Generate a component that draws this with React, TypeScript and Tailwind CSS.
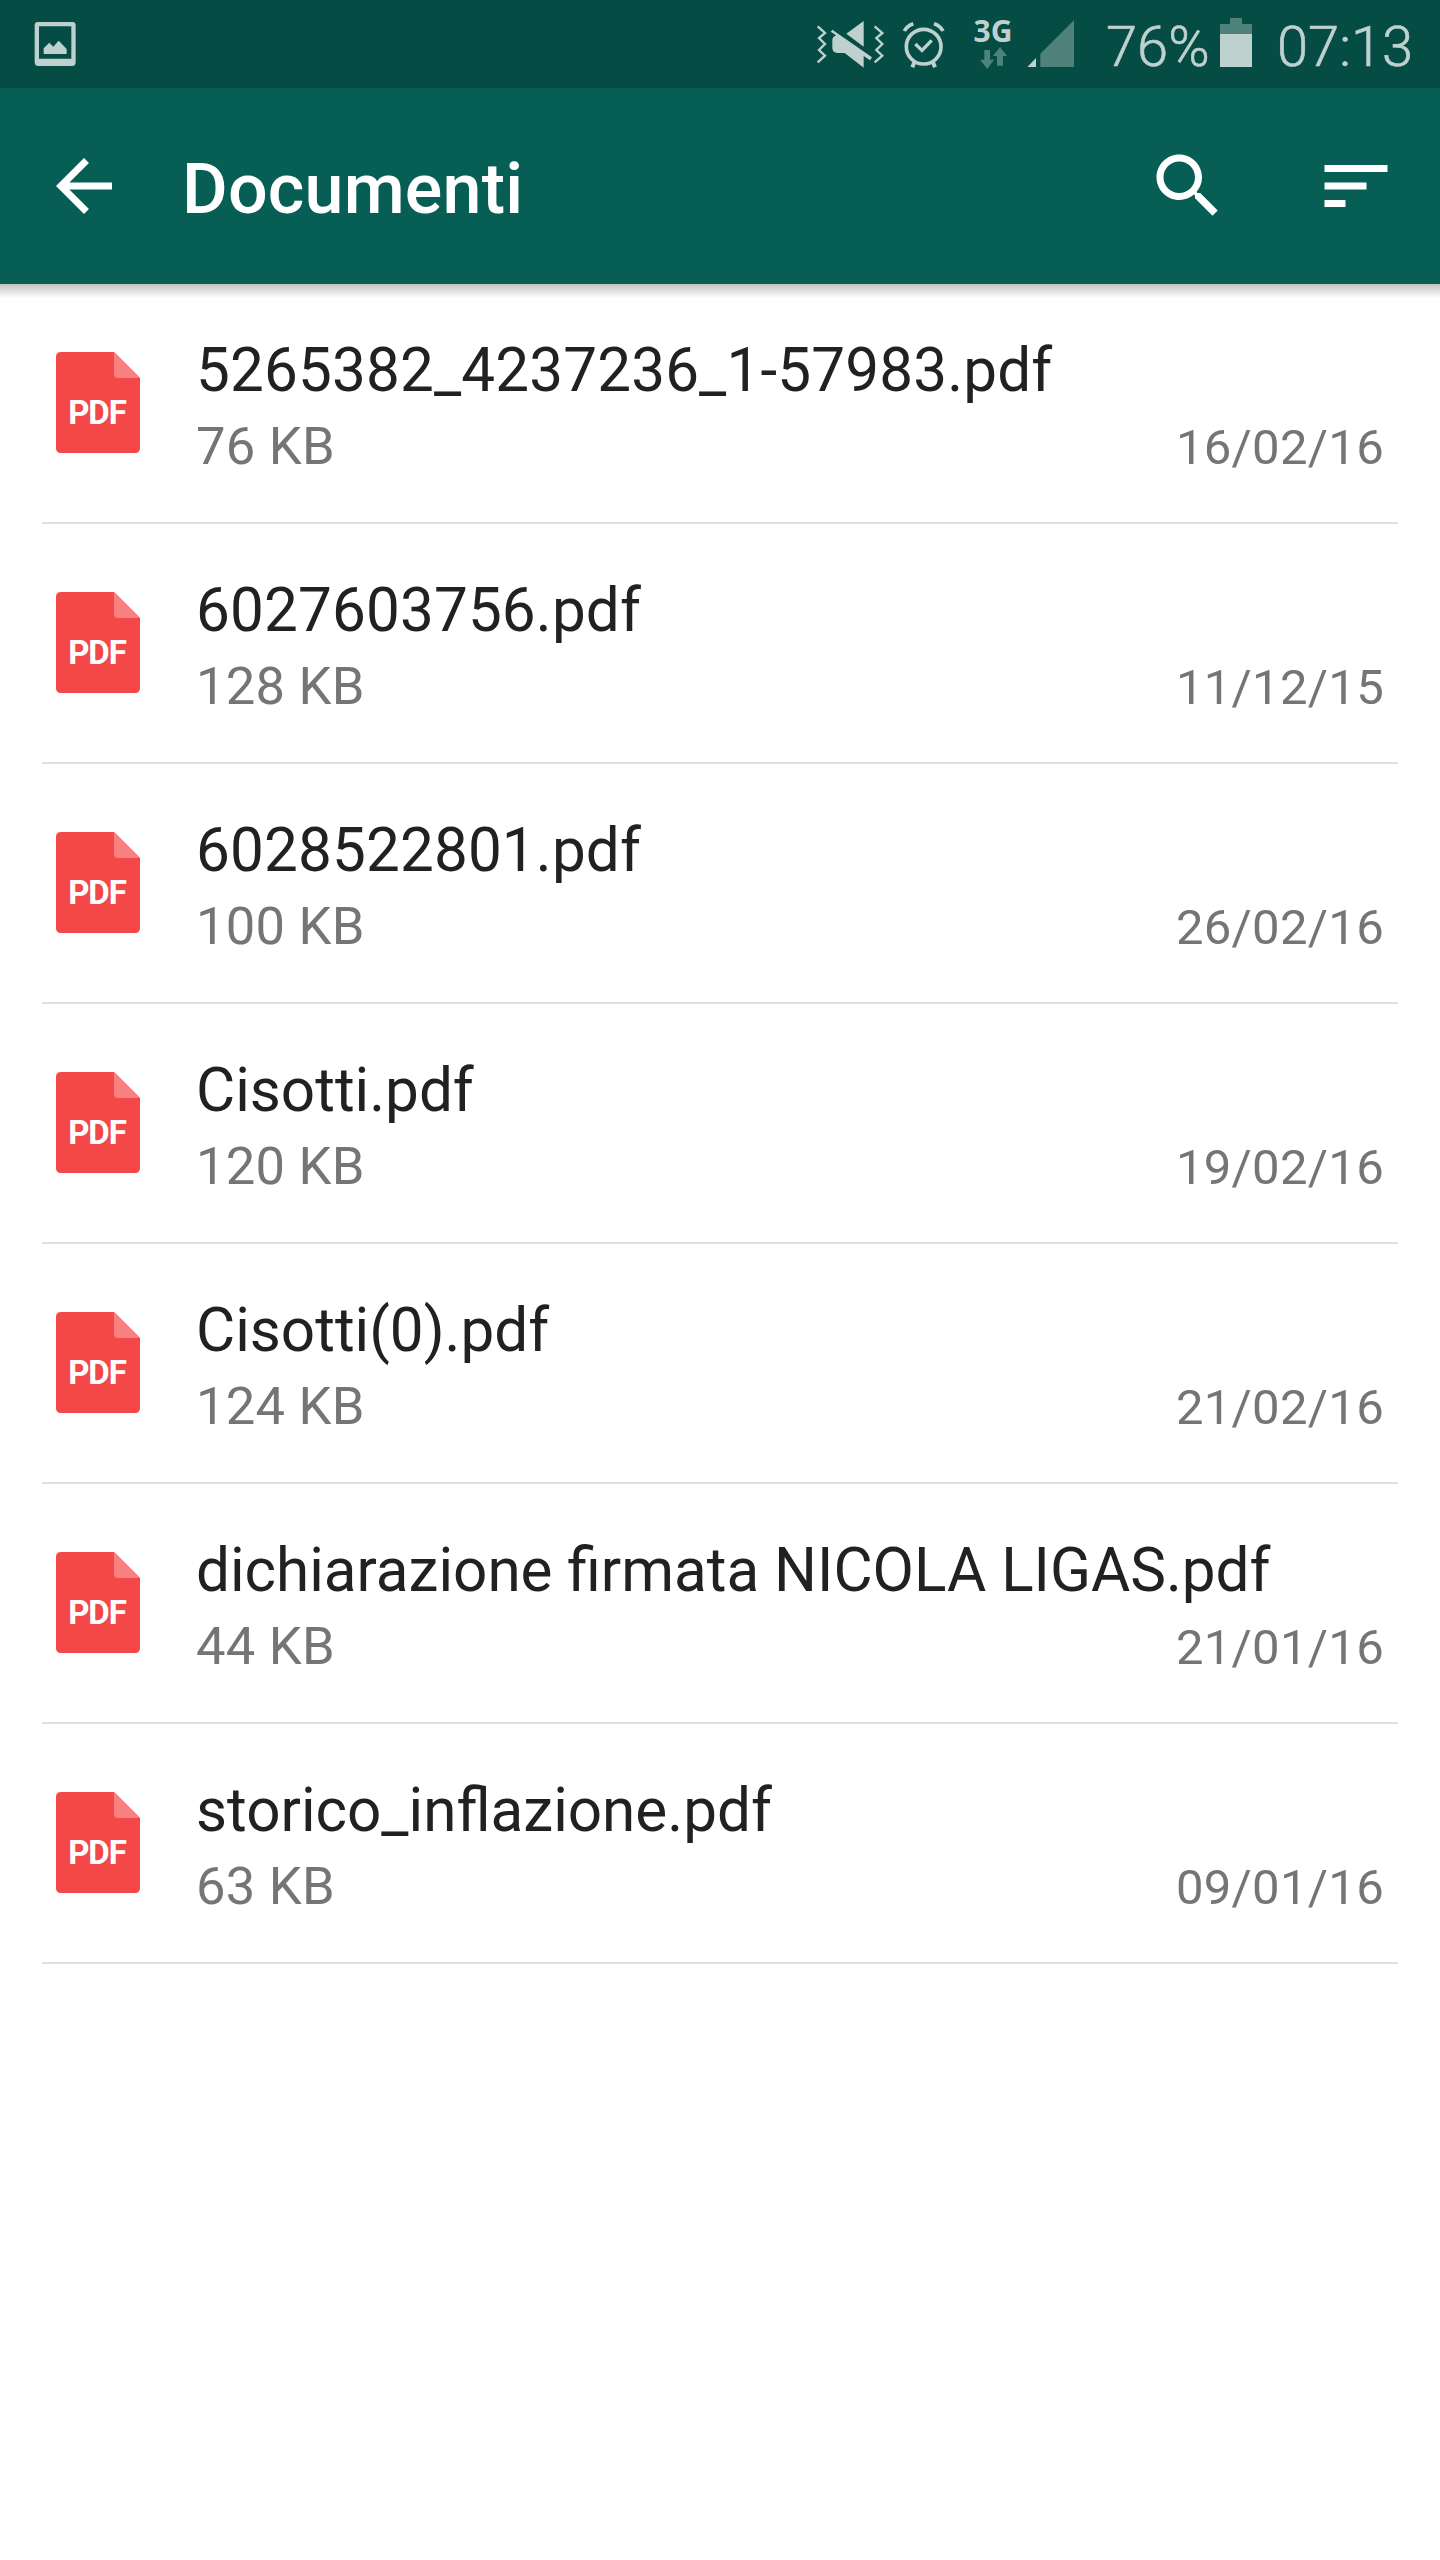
type Doc = { name: string; size: string; date: string }

const docs: Doc[] = [
  { name: '5265382_4237236_1-57983.pdf', size: '76 KB', date: '16/02/16' },
  { name: '6027603756.pdf', size: '128 KB', date: '11/12/15' },
  { name: '6028522801.pdf', size: '100 KB', date: '26/02/16' },
  { name: 'Cisotti.pdf', size: '120 KB', date: '19/02/16' },
  { name: 'Cisotti(0).pdf', size: '124 KB', date: '21/02/16' },
  { name: 'dichiarazione firmata NICOLA LIGAS.pdf', size: '44 KB', date: '21/01/16' },
  { name: 'storico_inflazione.pdf', size: '63 KB', date: '09/01/16' },
]

function StatusBar() {
  return (
    <div className="flex h-[88px] items-start bg-[#054D44] text-[#BFD1CF]">
      {/* Picture notification */}
      <svg viewBox="102 0 126 264" className="ml-[34px] h-[88px] w-[42px]" fill="currentColor">
        <path fillRule="evenodd" d="M114 66h103q10 0 10 10v111q0 11-11 11h-101q-11 0-11-11V76q0-10 10-10zM117 79v97h97V79z" />
        <path d="M131 145l17-17 12 12 16-18 24 25v15h-69z" />
      </svg>

      {/* Vibrate / muted */}
      <svg viewBox="48 0 204 264" className="ml-[740px] h-[88px] w-[68px]" fill="currentColor">
        <path d="M53 79l22 20-18 15 18 18-18 18 18 17-22 20M224 79l23 20-18 15 18 18-18 18 18 17-23 20" fill="none" stroke="currentColor" strokeWidth="7" />
        <path d="M191 63v77l-52-39z" />
        <path d="M97 89l119 83-6 9-19-13v35l-57-44h-22q-14-1-15-14v-26q0-5 4-9l7-4-16-11z" />
      </svg>

      {/* Alarm */}
      <svg viewBox="306 0 129 264" className="ml-[18px] h-[88px] w-[43px]" fill="none" stroke="currentColor">
        <circle cx="371" cy="140" r="52" strokeWidth="11" />
        <path d="M346 132l20 19 29-30" strokeWidth="10" />
        <path d="M313 93q8-16 27-22M429 93q-8-16-27-22" strokeWidth="11" />
        <path d="M343 187l-6 15M399 187l6 15" strokeWidth="12" />
      </svg>

      <div className="ml-[28px] flex w-[40px] flex-col items-center pt-[15px]">
        <span className="font-['Open_Sans'] text-[30px] leading-[32px] font-bold">3G</span>
        <svg viewBox="541 141 81 66" className="h-[22px] w-[27px]" fill="#4F827A">
          <path d="M554 150h17v29h12l-20 28-22-28h13zM592 197v-29h-12l21-27 21 27h-12v29z" />
        </svg>
      </div>

      {/* Signal */}
      <svg viewBox="681 0 141 264" className="ml-[14px] h-[88px] w-[47px]">
        <path d="M682 201l26-27v27z" fill="currentColor" />
        <path d="M721 201v-40L822 61v140z" fill="#4F827A" />
      </svg>

      <span className="ml-[32px] w-[102px] pt-[14px] font-[Roboto] text-[56px] leading-[66px] font-light whitespace-nowrap [-webkit-text-stroke:0.6px_#BFD1CF]">76%</span>

      <svg viewBox="0 0 32 88" className="ml-[12px] h-[88px] w-[32px]">
        <path d="M0 34V24h10v-6h12v6h10v10z" fill="#4F827A" />
        <path d="M0 34h32v33H0z" fill="currentColor" />
      </svg>

      <span className="ml-[25px] pt-[14px] font-[Roboto] text-[56px] leading-[66px] font-light whitespace-nowrap [-webkit-text-stroke:0.6px_#BFD1CF]">07:13</span>
    </div>
  )
}

function Toolbar() {
  return (
    <header className="relative flex h-[196px] items-center bg-[#075E54] text-white">
      <svg viewBox="0 0 24 24" className="ml-[42px] size-[84px]" fill="currentColor">
        <path d="M20 11H7.83l5.59-5.59L12 4l-8 8 8 8 1.41-1.41L7.83 13H20v-2z" />
      </svg>
      <h1 className="ml-[56px] grow pt-[5px] font-[Roboto] text-[70px] leading-[82px] font-medium tracking-[0.2px]">Documenti</h1>
      <svg viewBox="0 0 24 24" className="size-[84px]" fill="currentColor">
        <path d="M15.5 14h-.79l-.28-.27C15.41 12.59 16 11.11 16 9.5 16 5.91 13.09 3 9.5 3S3 5.91 3 9.5 5.91 16 9.5 16c1.61 0 3.09-.59 4.23-1.57l.27.28v.79l5 4.99L20.49 19l-4.99-5zm-6 0C7.01 14 5 11.99 5 9.5S7.01 5 9.5 5 14 7.01 14 9.5 11.99 14 9.5 14z" />
      </svg>
      <svg viewBox="0 0 24 24" className="mr-[42px] ml-[84px] size-[84px]" fill="currentColor">
        <path d="M3 18h6v-2H3v2zM3 6v2h18V6H3zm0 7h12v-2H3v2z" />
      </svg>
      <div className="absolute inset-x-0 top-full h-[14px] bg-linear-to-b from-black/24 to-transparent" />
    </header>
  )
}

function PdfIcon() {
  return (
    <svg viewBox="0 0 84 101" className="mt-[68px] h-[101px] w-[84px] shrink-0">
      <path d="M5 0h53l26 26v70q0 5-5 5H5q-5 0-5-5V5q0-5 5-5z" fill="#F44747" />
      <path d="M58 0l26 26H62q-4 0-4-4z" fill="#F98080" />
      <text x="41.5" y="72" textAnchor="middle" fontFamily="Roboto, sans-serif" fontSize="33" fontWeight="700" textLength="58.5" fill="#fff">PDF</text>
    </svg>
  )
}

function DocRow({ doc }: { doc: Doc }) {
  // numeric names run slightly wider
  const tracking = /^\d/.test(doc.name) ? 'tracking-[0.16px]' : 'tracking-normal'

  return (
    <li className="mx-[42px] flex h-[240px] border-b-2 border-[#E0E0E0] pl-[14px]">
      <PdfIcon />
      <div className="ml-[56px] grow pt-[52px] pr-[14px] font-[Roboto]">
        <p className={`text-[60.2px] leading-[70px] whitespace-nowrap text-[#212121] ${tracking}`}>{doc.name}</p>
        <div className="mt-[9px] flex items-baseline justify-between text-[#757575]">
          <span className="text-[52.5px] leading-[62px] tracking-[0.25px]">{doc.size}</span>
          <span className="text-[49px] leading-[62px] tracking-[0.3px]">{doc.date}</span>
        </div>
      </div>
    </li>
  )
}

export default function App() {
  return (
    <div className="h-[2560px] w-[1440px] overflow-hidden bg-white">
      <StatusBar />
      <Toolbar />
      <ul>
        {docs.map(doc => (
          <DocRow key={doc.name} doc={doc} />
        ))}
      </ul>
    </div>
  )
}
